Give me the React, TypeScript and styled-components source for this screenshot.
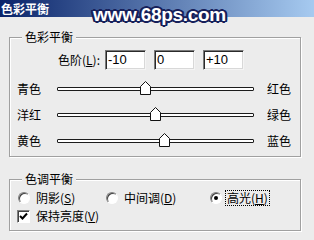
import React from "react"
import styled, { createGlobalStyle } from "styled-components"

const GlobalStyle = createGlobalStyle`
  html, body {
    margin: 0;
    padding: 0;
    background: #ececec;
  }
  body {
    font-family: "Noto Sans CJK SC", "Liberation Sans", sans-serif;
  }
`

const Dialog = styled.div`
  position: relative;
  width: 314px;
  height: 240px;
  overflow: hidden;
  background: #ececec;
  font-size: 12px;
  line-height: 14px;
  color: #000;
`

const TitleBar = styled.div`
  height: 17px;
  padding-left: 1px;
  background: linear-gradient(to right, #0a246a, #a6caf0);
  color: #fff;
  font-weight: bold;
  font-size: 12px;
  line-height: 17px;
`

const Watermark = styled.div`
  position: absolute;
  left: 93px;
  top: 5px;
  font-family: "Liberation Sans", Arial, sans-serif;
  font-weight: bold;
  font-size: 19px;
  line-height: 20px;
  letter-spacing: -0.3px;
  color: #fff;
  text-shadow:
    -2px 0 0 #16205a, 2px 0 0 #16205a, 0 -2px 0 #16205a, 0 2px 0 #16205a,
    -1px -1px 0 #16205a, 1px 1px 0 #16205a, -1px 1px 0 #16205a, 1px -1px 0 #16205a,
    -2px 1px 0 #16205a, 2px 1px 0 #16205a, -2px -1px 0 #16205a, 2px -1px 0 #16205a;
`

const Group = styled.fieldset<{ $top: number }>`
  box-sizing: border-box;
  width: 292px;
  min-width: 0;
  margin: ${p => p.$top}px 0 0 9px;
  padding: 0;
  border: 1px solid #a0a0a0;
  box-shadow: inset 1px 1px 0 #fff, 1px 1px 0 #fff;
`

const Legend = styled.legend`
  margin-left: 12px;
  padding: 0 3px;
  background: #ececec;
  font-size: 12px;
  line-height: 14px;
`

const GroupBody = styled.div<{ $pad: string }>`
  padding: ${p => p.$pad};
`

const LevelsRow = styled.div`
  display: flex;
  align-items: center;
  height: 20px;
  padding-left: 41px;
`

const LevelsLabel = styled.span`
  margin-right: 5px;
`

const NumberBox = styled.div<{ $gap: number }>`
  box-sizing: border-box;
  width: 41px;
  height: 20px;
  margin-right: ${p => p.$gap}px;
  padding: 1px 2px 0;
  background: #fff;
  border: 1px solid;
  border-color: #7a7a7a #f4f4f4 #f4f4f4 #7a7a7a;
  box-shadow: inset 1px 1px 0 #2a2a2a, inset -1px -1px 0 #d8d8d8;
  font-family: "Liberation Sans", Arial, sans-serif;
  font-size: 13px;
  line-height: 16px;
`

const SliderRow = styled.div<{ $first?: boolean }>`
  display: grid;
  grid-template-columns: 40px 197px auto;
  align-items: center;
  height: 26px;
  margin-top: ${p => (p.$first ? 6 : 0)}px;
`

const EndLabel = styled.span`
  padding-left: 13px;
`

const Track = styled.div`
  position: relative;
  box-sizing: border-box;
  height: 4px;
  background: #fff;
  border: 1px solid #1c1c1c;
  border-radius: 1px;
`

const Thumb = styled.div`
  position: absolute;
  top: -7px;
  width: 11px;
  height: 14px;
  margin-left: -6px;

  svg {
    display: block;
  }
`

const OptionRow = styled.div`
  display: flex;
  align-items: center;
  height: 18px;
`

const Option = styled.label<{ $width?: number }>`
  display: flex;
  align-items: center;
  width: ${p => (p.$width ? `${p.$width}px` : "auto")};
`

const RadioCircle = styled.span<{ $checked?: boolean }>`
  position: relative;
  box-sizing: border-box;
  width: 12px;
  height: 12px;
  border-radius: 50%;
  border: 1px solid;
  border-color: #808080 #fff #fff #808080;
  background: #fff;
  box-shadow: inset 1px 1px 0 #404040;

  &::after {
    content: "";
    display: ${p => (p.$checked ? "block" : "none")};
    position: absolute;
    left: 3px;
    top: 3px;
    width: 4px;
    height: 4px;
    border-radius: 50%;
    background: #000;
  }
`

const CheckBox = styled.span`
  box-sizing: border-box;
  display: flex;
  align-items: center;
  justify-content: center;
  width: 13px;
  height: 13px;
  margin-left: -1px;
  border: 1px solid;
  border-color: #808080 #fff #fff #808080;
  background: #fff;
  box-shadow: inset 1px 1px 0 #404040;
`

const OptionText = styled.span<{ $focus?: boolean }>`
  margin-left: ${p => (p.$focus ? 4 : 5)}px;
  padding: 0 1px;
  outline: ${p => (p.$focus ? "1px dotted #000" : "none")};
`

const Slider = ({ value }: { value: number }) => {
  const pct = ((value + 100) / 200) * 100
  return (
    <Track>
      <Thumb style={{ left: `${pct}%` }}>
        <svg width="11" height="14" viewBox="0 0 11 14">
          <path
            d="M0.5 5.5 L5.5 0.5 L10.5 5.5 L10.5 13.5 L0.5 13.5 Z"
            fill="#fff"
            stroke="#111"
            strokeWidth="1"
          />
        </svg>
      </Thumb>
    </Track>
  )
}

const sliders = [
  { left: "青色", right: "红色", value: -10 },
  { left: "洋红", right: "绿色", value: 0 },
  { left: "黄色", right: "蓝色", value: 10 },
]

export default function App() {
  return (
    <Dialog>
      <GlobalStyle />
      <TitleBar>色彩平衡</TitleBar>
      <Watermark>www.68ps.com</Watermark>

      <Group $top={13}>
        <Legend>色彩平衡</Legend>
        <GroupBody $pad="6px 0 2px 7px">
          <LevelsRow>
            <LevelsLabel>
              色阶(<u>L</u>):
            </LevelsLabel>
            <NumberBox $gap={8}>-10</NumberBox>
            <NumberBox $gap={8}>0</NumberBox>
            <NumberBox $gap={0}>+10</NumberBox>
          </LevelsRow>
          {sliders.map((s, i) => (
            <SliderRow key={s.left} $first={i === 0}>
              <span>{s.left}</span>
              <Slider value={s.value} />
              <EndLabel>{s.right}</EndLabel>
            </SliderRow>
          ))}
        </GroupBody>
      </Group>

      <Group $top={15}>
        <Legend>色调平衡</Legend>
        <GroupBody $pad="3px 0 5px 8px">
          <OptionRow>
            <Option $width={88}>
              <RadioCircle />
              <OptionText>
                阴影(<u>S</u>)
              </OptionText>
            </Option>
            <Option $width={104}>
              <RadioCircle />
              <OptionText>
                中间调(<u>D</u>)
              </OptionText>
            </Option>
            <Option>
              <RadioCircle $checked />
              <OptionText $focus>
                高光(<u>H</u>)
              </OptionText>
            </Option>
          </OptionRow>
          <OptionRow>
            <Option>
              <CheckBox>
                <svg width="9" height="9" viewBox="0 0 9 9">
                  <path d="M1 4 L3.5 6.5 L8 1.5" fill="none" stroke="#000" strokeWidth="2" />
                </svg>
              </CheckBox>
              <OptionText>
                保持亮度(<u>V</u>)
              </OptionText>
            </Option>
          </OptionRow>
        </GroupBody>
      </Group>
    </Dialog>
  )
}
